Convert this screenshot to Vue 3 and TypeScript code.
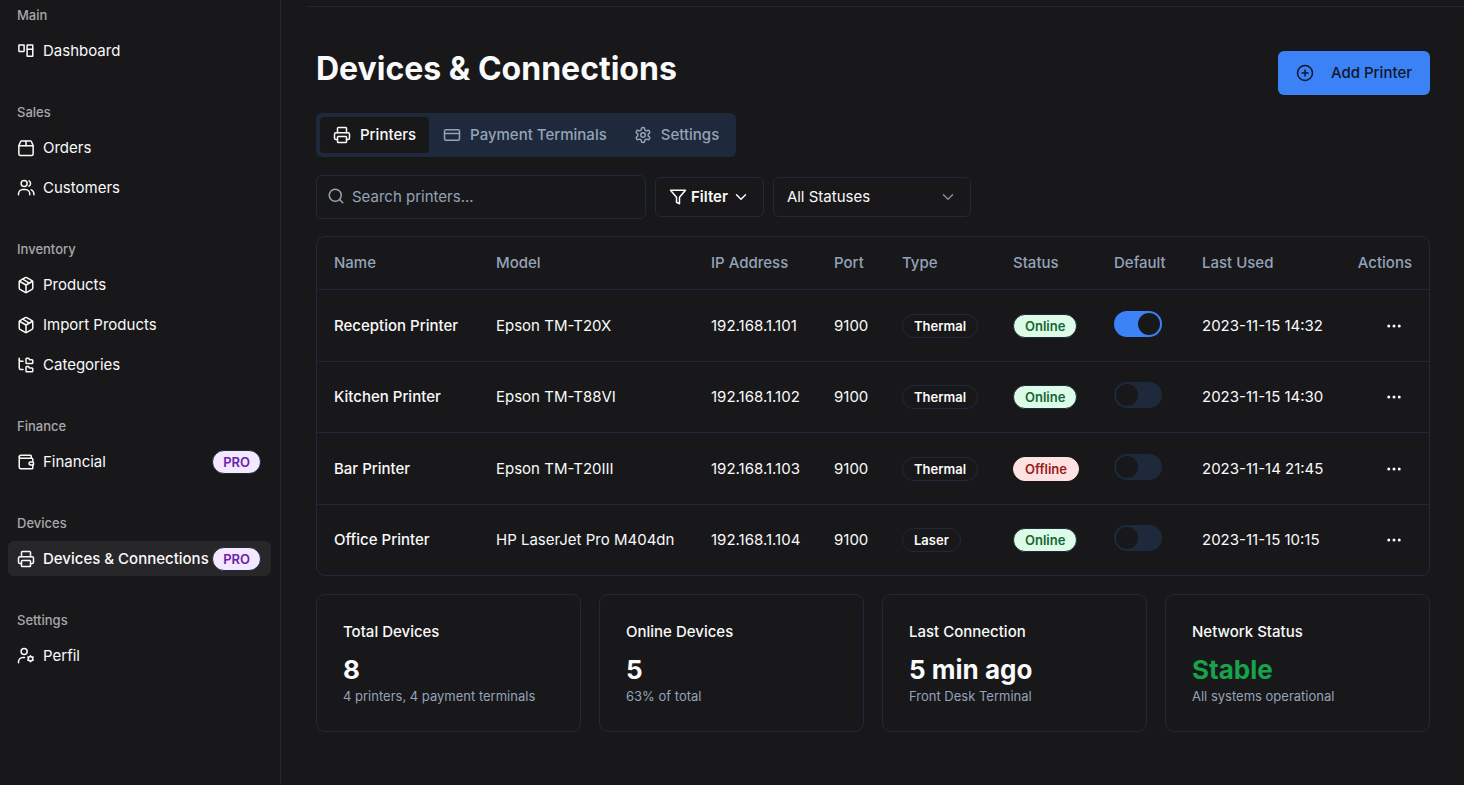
<script setup lang="ts">
import { computed, defineComponent, h, ref } from 'vue'

type Shape = [tag: string, attrs: Record<string, string | number>]

const p = (d: string): Shape => ['path', { d }]
const c = (cx: number, cy: number, r: number): Shape => ['circle', { cx, cy, r }]
const r = (x: number, y: number, width: number, height: number, rx: number): Shape => [
  'rect',
  { x, y, width, height, rx },
]

const icons: Record<string, Shape[]> = {
  dashboard: [r(2.5, 4, 7, 8.5, 0.5), r(13.5, 4, 7.5, 15, 0.5), p('M13.5 9.5H21')],
  orders: [
    p('M2.5 9h19v11a2 2 0 0 1-2 2h-15a2 2 0 0 1-2-2z'),
    p('m2.5 9 2-5A2.5 2.5 0 0 1 7 2.5h10A2.5 2.5 0 0 1 19.500 4l2 5'),
    p('M12 2.5V9'),
  ],
  users: [
    p('M2 21v-1a6 6 0 0 1 6-6h3a6 6 0 0 1 6 6v1'),
    c(9.5, 6, 4),
    p('M16 2.500a4 4 0 0 1 0 7'),
    p('M19 14.500a6 6 0 0 1 3.500 5.500v1'),
  ],
  package: [
    p('M11 21.73a2 2 0 0 0 2 0l7-4A2 2 0 0 0 21 16V8a2 2 0 0 0-1-1.73l-7-4a2 2 0 0 0-2 0l-7 4A2 2 0 0 0 3 8v8a2 2 0 0 0 1 1.73z'),
    p('M12 22V12'),
    p('m3.3 7 8.7 5 8.7-5'),
    p('m7.5 4.27 9 5.15'),
  ],
  tree: [
    p('M20 10a1 1 0 0 0 1-1V6a1 1 0 0 0-1-1h-2.5a1 1 0 0 1-.8-.4l-.9-1.2A1 1 0 0 0 15 3h-2a1 1 0 0 0-1 1v5a1 1 0 0 0 1 1Z'),
    p('M20 21a1 1 0 0 0 1-1v-3a1 1 0 0 0-1-1h-2.9a1 1 0 0 1-.88-.55l-.42-.85a1 1 0 0 0-.92-.6H13a1 1 0 0 0-1 1v5a1 1 0 0 0 1 1Z'),
    p('M3 5a2 2 0 0 0 2 2h3'),
    p('M3 3v13a2 2 0 0 0 2 2h3'),
  ],
  wallet: [
    p('M19 7V4a1 1 0 0 0-1-1H5a2 2 0 0 0 0 4h15a1 1 0 0 1 1 1v4h-3a2 2 0 0 0 0 4h3a1 1 0 0 0 1-1v-2a1 1 0 0 0-1-1'),
    p('M3 5v14a2 2 0 0 0 2 2h15a1 1 0 0 0 1-1v-4'),
  ],
  printer: [
    p('M6 18H4a2 2 0 0 1-2-2v-5a2 2 0 0 1 2-2h16a2 2 0 0 1 2 2v5a2 2 0 0 1-2 2h-2'),
    p('M6 9V3a1 1 0 0 1 1-1h10a1 1 0 0 1 1 1v6'),
    r(6, 14, 12, 8, 1),
  ],
  profile: [
    p('M2 21v-1a6 6 0 0 1 6-6h2'),
    c(9.5, 6, 4),
    c(18, 15.5, 3),
    p('M18 11.500v1M18 18.500v1M14.500 13.500l.9.5M20.600 17l.9.5M14.500 17.500l.9-.5M20.600 14l.9-.5'),
  ],
  card: [r(2, 5, 20, 14, 2), p('M2 10h20')],
  settings: [
    p('M12.22 2h-.44a2 2 0 0 0-2 2v.18a2 2 0 0 1-1 1.73l-.43.25a2 2 0 0 1-2 0l-.15-.08a2 2 0 0 0-2.73.73l-.22.38a2 2 0 0 0 .73 2.73l.15.1a2 2 0 0 1 1 1.72v.51a2 2 0 0 1-1 1.74l-.15.09a2 2 0 0 0-.73 2.73l.22.38a2 2 0 0 0 2.73.73l.15-.08a2 2 0 0 1 2 0l.43.25a2 2 0 0 1 1 1.73V20a2 2 0 0 0 2 2h.44a2 2 0 0 0 2-2v-.18a2 2 0 0 1 1-1.73l.43-.25a2 2 0 0 1 2 0l.15.08a2 2 0 0 0 2.73-.73l.22-.39a2 2 0 0 0-.73-2.73l-.15-.08a2 2 0 0 1-1-1.74v-.5a2 2 0 0 1 1-1.74l.15-.09a2 2 0 0 0 .73-2.73l-.22-.38a2 2 0 0 0-2.73-.73l-.15.08a2 2 0 0 1-2 0l-.43-.25a2 2 0 0 1-1-1.73V4a2 2 0 0 0-2-2z'),
    c(12, 12, 3),
  ],
  search: [c(11, 11, 8), p('m21 21-4.3-4.3')],
  filter: [p('M22 3H2l8 9.46V19l4 2v-8.54z')],
  chevron: [p('m6 9 6 6 6-6')],
  plus: [c(12, 12, 10), p('M8 12h8M12 8v8')],
  dots: [c(12, 12, 1), c(19, 12, 1), c(5, 12, 1)],
}

const Icon = defineComponent({
  props: { name: { type: String, required: true } },
  setup(props) {
    return () =>
      h(
        'svg',
        {
          viewBox: '0 0 24 24',
          fill: 'none',
          stroke: 'currentColor',
          'stroke-width': 2,
          'stroke-linecap': 'round',
          'stroke-linejoin': 'round',
          'aria-hidden': 'true',
        },
        icons[props.name].map(([tag, attrs]) => h(tag, attrs)),
      )
  },
})

interface NavItem {
  label: string
  icon: string
  pro?: boolean
  active?: boolean
}

const sections: { title: string; items: NavItem[] }[] = [
  { title: 'Main', items: [{ label: 'Dashboard', icon: 'dashboard' }] },
  {
    title: 'Sales',
    items: [
      { label: 'Orders', icon: 'orders' },
      { label: 'Customers', icon: 'users' },
    ],
  },
  {
    title: 'Inventory',
    items: [
      { label: 'Products', icon: 'package' },
      { label: 'Import Products', icon: 'package' },
      { label: 'Categories', icon: 'tree' },
    ],
  },
  { title: 'Finance', items: [{ label: 'Financial', icon: 'wallet', pro: true }] },
  { title: 'Devices', items: [{ label: 'Devices & Connections', icon: 'printer', pro: true, active: true }] },
  { title: 'Settings', items: [{ label: 'Perfil', icon: 'profile' }] },
]

const tabs = [
  { label: 'Printers', icon: 'printer' },
  { label: 'Payment Terminals', icon: 'card' },
  { label: 'Settings', icon: 'settings' },
]
const activeTab = ref('Printers')

const columns = ['Name', 'Model', 'IP Address', 'Port', 'Type', 'Status', 'Default', 'Last Used', 'Actions']

const printers = ref([
  { name: 'Reception Printer', model: 'Epson TM-T20X', ip: '192.168.1.101', port: 9100, type: 'Thermal', status: 'Online', isDefault: true, lastUsed: '2023-11-15 14:32' },
  { name: 'Kitchen Printer', model: 'Epson TM-T88VI', ip: '192.168.1.102', port: 9100, type: 'Thermal', status: 'Online', isDefault: false, lastUsed: '2023-11-15 14:30' },
  { name: 'Bar Printer', model: 'Epson TM-T20III', ip: '192.168.1.103', port: 9100, type: 'Thermal', status: 'Offline', isDefault: false, lastUsed: '2023-11-14 21:45' },
  { name: 'Office Printer', model: 'HP LaserJet Pro M404dn', ip: '192.168.1.104', port: 9100, type: 'Laser', status: 'Online', isDefault: false, lastUsed: '2023-11-15 10:15' },
])

const query = ref('')
const status = ref('All Statuses')

const visiblePrinters = computed(() =>
  printers.value.filter(
    (item) =>
      item.name.toLowerCase().includes(query.value.toLowerCase()) &&
      (status.value === 'All Statuses' || item.status === status.value),
  ),
)

const stats = [
  { title: 'Total Devices', value: '8', note: '4 printers, 4 payment terminals' },
  { title: 'Online Devices', value: '5', note: '63% of total' },
  { title: 'Last Connection', value: '5 min ago', note: 'Front Desk Terminal' },
  { title: 'Network Status', value: 'Stable', note: 'All systems operational', good: true },
]
</script>

<template>
  <div class="shell">
    <nav class="sidebar" aria-label="Main navigation">
      <section v-for="section in sections" :key="section.title" class="group">
        <h2 class="group-title">{{ section.title }}</h2>
        <a
          v-for="item in section.items"
          :key="item.label"
          href="#"
          class="nav-item"
          :class="{ active: item.active }"
          @click.prevent
        >
          <Icon :name="item.icon" class="icon" />
          <span class="nav-label">{{ item.label }}</span>
          <span v-if="item.pro" class="badge pro">PRO</span>
        </a>
      </section>
    </nav>

    <div class="page">
      <div class="topline"></div>
      <main class="content">
        <header class="heading">
          <h1>Devices &amp; Connections</h1>
          <button type="button" class="add"><Icon name="plus" class="icon" />Add Printer</button>
        </header>

        <div class="tabs" role="tablist">
          <button
            v-for="tab in tabs"
            :key="tab.label"
            type="button"
            role="tab"
            class="tab"
            :class="{ active: activeTab === tab.label }"
            :aria-selected="activeTab === tab.label"
            @click="activeTab = tab.label"
          >
            <Icon :name="tab.icon" class="icon" />{{ tab.label }}
          </button>
        </div>

        <div class="tools">
          <label class="search">
            <Icon name="search" class="icon" />
            <input v-model="query" type="search" placeholder="Search printers..." aria-label="Search printers" />
          </label>
          <button type="button" class="filter">
            <Icon name="filter" class="icon" />Filter<Icon name="chevron" class="icon" />
          </button>
          <label class="select">
            <select v-model="status" aria-label="Status">
              <option>All Statuses</option>
              <option>Online</option>
              <option>Offline</option>
            </select>
            <Icon name="chevron" class="icon" />
          </label>
        </div>

        <div class="table-box">
          <table>
            <thead>
              <tr>
                <th v-for="column in columns" :key="column" scope="col">{{ column }}</th>
              </tr>
            </thead>
            <tbody>
              <tr v-for="item in visiblePrinters" :key="item.name">
                <td class="name">{{ item.name }}</td>
                <td>{{ item.model }}</td>
                <td>{{ item.ip }}</td>
                <td>{{ item.port }}</td>
                <td><span class="badge">{{ item.type }}</span></td>
                <td><span class="badge" :class="item.status.toLowerCase()">{{ item.status }}</span></td>
                <td>
                  <input v-model="item.isDefault" type="checkbox" role="switch" class="switch" :aria-label="`Use ${item.name} by default`" />
                </td>
                <td>{{ item.lastUsed }}</td>
                <td>
                  <button type="button" class="more" :aria-label="`Actions for ${item.name}`"><Icon name="dots" class="icon" /></button>
                </td>
              </tr>
            </tbody>
          </table>
        </div>

        <div class="stats">
          <article v-for="stat in stats" :key="stat.title" class="stat">
            <h3>{{ stat.title }}</h3>
            <strong :class="{ good: stat.good }">{{ stat.value }}</strong>
            <p>{{ stat.note }}</p>
          </article>
        </div>
      </main>
    </div>
  </div>
</template>

<style>
body {
  margin: 0;
  background: #18181a;
}
</style>

<style scoped>
* {
  box-sizing: border-box;
}

.shell {
  display: flex;
  min-height: 100vh;
  background: #18181a;
  color: #fafafa;
  font-family: Inter, 'Liberation Sans', sans-serif;
  font-size: 15px;
  line-height: 22px;
}

button,
input,
select {
  font: inherit;
  color: inherit;
}

button {
  cursor: pointer;
}

.icon {
  width: 18px;
  height: 18px;
  flex: none;
}

.sidebar {
  flex: none;
  width: 281px;
  padding: 0 9px 0 8px;
  border-right: 1px solid #1e293b;
}

.group {
  display: flex;
  flex-direction: column;
  gap: 5px;
  margin-bottom: 29px;
}

.group-title {
  margin: 0;
  padding: 6px 9px 0;
  height: 28px;
  color: #a8a8aa;
  font-size: 13px;
  font-weight: 500;
  line-height: 18px;
}

.nav-item {
  display: flex;
  align-items: center;
  gap: 8px;
  height: 35px;
  padding: 0 10px 0 9px;
  border-radius: 6px;
  color: #fafafa;
  text-decoration: none;
  white-space: nowrap;
}

.nav-item.active {
  background: #27272a;
  font-weight: 500;
}

.nav-label {
  flex: 1;
  min-width: 0;
}

.badge {
  display: inline-flex;
  align-items: center;
  height: 24px;
  padding: 0 11px;
  border: 1px solid #1e293b;
  border-radius: 12px;
  font-size: 13px;
  font-weight: 600;
  line-height: 18px;
  vertical-align: middle;
}

.pro {
  margin-left: -8px;
  padding: 0 10px;
  background: #f3e8ff;
  color: #6b21a8;
}

.online {
  background: #dcfce7;
  color: #166534;
}

.offline {
  background: #fee2e2;
  border-color: #fee2e2;
  color: #991b1b;
}

.page {
  flex: 1;
  min-width: 0;
  padding-top: 6px;
}

.topline {
  height: 1px;
  margin-left: 26px;
  background: #1e293b;
}

.content {
  display: flex;
  flex-direction: column;
  gap: 18px;
  padding: 44px 34px 44px 35px;
}

.heading {
  display: flex;
  align-items: flex-start;
  justify-content: space-between;
}

h1 {
  margin: 0;
  font-size: 32px;
  font-weight: 700;
  line-height: 36px;
}

.add {
  display: flex;
  align-items: center;
  gap: 17px;
  height: 44px;
  padding: 0 18px;
  border: 0;
  border-radius: 6px;
  background: #3b82f6;
  color: #0f172a;
  font-weight: 500;
}

.tabs {
  display: flex;
  align-self: flex-start;
  gap: 1px;
  padding: 4px;
  border-radius: 6px;
  background: #1e293b;
}

.tab {
  display: flex;
  align-items: center;
  gap: 9px;
  height: 36px;
  padding: 0 13px;
  border: 0;
  border-radius: 4px;
  background: transparent;
  color: #94a3b8;
  font-weight: 500;
}

.tab.active {
  background: #18181a;
  color: #fafafa;
}

.tools {
  display: flex;
  align-items: center;
  gap: 9px;
  margin-bottom: -1px;
}

.search,
.filter,
.select {
  display: flex;
  align-items: center;
  border: 1px solid #1e293b;
  border-radius: 6px;
}

.search {
  width: 330px;
  height: 44px;
  padding-left: 10px;
  color: #94a3b8;
}

.search .icon {
  margin-bottom: 3px;
}

.search input {
  flex: 1;
  min-width: 0;
  padding: 0 7px;
  border: 0;
  outline: 0;
  background: transparent;
}

.search input::placeholder {
  color: #94a3b8;
  opacity: 1;
}

.filter {
  gap: 4px;
  height: 40px;
  padding: 0 13px;
  background: transparent;
  font-weight: 600;
}

.select {
  position: relative;
  width: 198px;
  height: 40px;
}

.select select {
  width: 100%;
  height: 100%;
  padding: 0 13px;
  border: 0;
  border-radius: 6px;
  outline: 0;
  appearance: none;
  background: #18181a;
}

.select .icon {
  position: absolute;
  right: 13px;
  opacity: 0.5;
  pointer-events: none;
}

.table-box {
  border: 1px solid #1e293b;
  border-radius: 9px;
  overflow: hidden;
}

table {
  width: 100%;
  border-collapse: separate;
  border-spacing: 0;
  table-layout: fixed;
}

th,
td {
  box-sizing: content-box;
  padding: 0 0 0 17px;
  border-bottom: 1px solid #1e293b;
  text-align: left;
  vertical-align: middle;
  white-space: nowrap;
}

th {
  height: 52px;
  color: #94a3b8;
  font-weight: 500;
}

th:nth-child(1) { width: 145px; }
th:nth-child(2) { width: 198px; }
th:nth-child(3) { width: 106px; }
th:nth-child(4) { width: 51px; }
th:nth-child(5) { width: 94px; }
th:nth-child(6) { width: 84px; }
th:nth-child(7) { width: 71px; }
th:nth-child(8) { width: 138px; }
th:nth-child(9) { width: 72px; }

th:last-child,
td:last-child {
  padding: 0 17px 0 0;
  text-align: right;
}

td {
  height: 70px;
}

tr:nth-child(odd) td {
  height: 71px;
}

tbody tr:last-child td {
  border-bottom: 0;
}

.name {
  font-weight: 500;
}

.switch {
  display: block;
  width: 48px;
  height: 26px;
  margin: 0 0 4px;
  padding: 2px;
  border-radius: 13px;
  appearance: none;
  background: #1e293b;
  cursor: pointer;
}

.switch::before {
  content: '';
  display: block;
  width: 22px;
  height: 22px;
  border-radius: 50%;
  background: #18181a;
}

.switch:checked {
  background: #3b82f6;
}

.switch:checked::before {
  margin-left: auto;
}

.more {
  display: inline-flex;
  align-items: center;
  justify-content: center;
  width: 36px;
  height: 36px;
  padding: 0;
  border: 0;
  background: transparent;
  vertical-align: middle;
}

.stats {
  display: grid;
  grid-template-columns: repeat(4, 1fr);
  gap: 18px;
}

.stat {
  padding: 26px;
  border: 1px solid #1e293b;
  border-radius: 9px;
}

.stat h3 {
  margin: 0 0 9px;
  font-size: 15px;
  font-weight: 500;
  line-height: 22px;
}

.stat strong {
  display: block;
  font-size: 26px;
  font-weight: 700;
  line-height: 35px;
}

.stat .good {
  color: #16a34a;
}

.stat p {
  margin: 0;
  color: #94a3b8;
  font-size: 13px;
  line-height: 18px;
}
</style>
